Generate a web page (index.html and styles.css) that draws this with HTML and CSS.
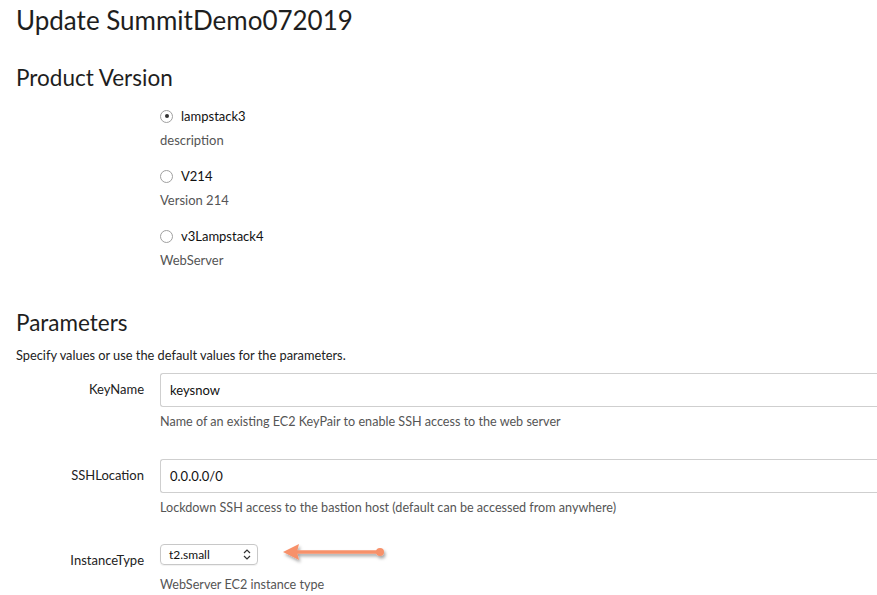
FILE: index.html
```html
<!DOCTYPE html>
<html>
<head>
<meta charset="utf-8">
<link rel="stylesheet" href="styles.css">
</head>
<body>
<div class="page">
  <h1 class="title">Update SummitDemo072019</h1>
  <h2 class="section">Product Version</h2>
  <div class="versions">
    <div class="version">
      <label class="radio-row"><span class="radio checked"></span><span class="radio-label">lampstack3</span></label>
      <div class="desc">description</div>
    </div>
    <div class="version">
      <label class="radio-row"><span class="radio"></span><span class="radio-label">V214</span></label>
      <div class="desc">Version 214</div>
    </div>
    <div class="version">
      <label class="radio-row"><span class="radio"></span><span class="radio-label">v3Lampstack4</span></label>
      <div class="desc">WebServer</div>
    </div>
  </div>
  <h2 class="section params">Parameters</h2>
  <p class="intro">Specify values or use the default values for the parameters.</p>
  <div class="param">
    <div class="plabel">KeyName</div>
    <div class="pfield">
      <div class="input">keysnow</div>
      <div class="help">Name of an existing EC2 KeyPair to enable SSH access to the web server</div>
    </div>
  </div>
  <div class="param">
    <div class="plabel">SSHLocation</div>
    <div class="pfield">
      <div class="input">0.0.0.0/0</div>
      <div class="help">Lockdown SSH access to the bastion host (default can be accessed from anywhere)</div>
    </div>
  </div>
  <div class="param select-param">
    <div class="plabel">InstanceType</div>
    <div class="pfield">
      <div class="select-row">
        <div class="select"><span>t2.small</span>
          <svg class="chev" width="8" height="11" viewBox="0 0 8 11"><path d="M1 4 L4 1 L7 4 M1 7 L4 10 L7 7" fill="none" stroke="#333" stroke-width="1.2"/></svg>
        </div>
        <svg class="arrow" width="110" height="28" viewBox="0 0 110 28">
          <defs>
            <filter id="sh" x="-20%" y="-50%" width="140%" height="200%">
              <feDropShadow dx="1.5" dy="2.5" stdDeviation="1.5" flood-color="#000" flood-opacity="0.35"/>
            </filter>
          </defs>
          <g filter="url(#sh)">
            <line x1="14" y1="12" x2="98" y2="12" stroke="#f7916a" stroke-width="3.5"/>
            <polygon points="1,12 17,4 15,12 17,20" fill="#f7916a"/>
            <circle cx="98" cy="12" r="4" fill="#f7916a"/>
          </g>
        </svg>
      </div>
      <div class="help">WebServer EC2 instance type</div>
    </div>
  </div>
</div>
</body>
</html>
```
FILE: styles.css
```css
* { box-sizing: border-box; }
html, body { margin: 0; padding: 0; background: #fff; }
body {
  font-family: "Source Sans Pro", Lato, "Open Sans", sans-serif;
  color: #222;
  overflow: hidden;
  width: 877px;
  height: 595px;
}
.page {
  padding: 3px 0 0 16px;
}
.title {
  margin: 0;
  font-size: 26px;
  font-weight: 400;
  line-height: 34px;
  color: #1e1e1e;
}
.section {
  margin: 27px 0 0 0;
  font-size: 22.5px;
  font-weight: 400;
  line-height: 28px;
  color: #1e1e1e;
}
.versions {
  margin-left: 144px;
  margin-top: 15px;
  display: flex;
  flex-direction: column;
  gap: 18px;
}
.version { display: flex; flex-direction: column; gap: 6px; }
.radio-row { display: flex; align-items: center; gap: 8px; height: 18px; }
.radio {
  width: 13px; height: 13px;
  border: 1px solid #a0a0a0;
  border-radius: 50%;
  background: #fff;
  display: flex; align-items: center; justify-content: center;
}
.radio.checked::after {
  content: "";
  width: 4px; height: 4px; border-radius: 50%;
  background: #333;
}
.radio-label { font-size: 13px; color: #111; }
.desc { font-size: 13px; color: #555; line-height: 18px; }
.params { margin-top: 40px; }
.intro { margin: 9px 0 0 0; font-size: 12.8px; color: #222; line-height: 18px; }
.param {
  display: flex;
  margin-top: 9px;
}
.param + .param { margin-top: 28px; }
.param + .select-param { margin-top: 25px; }
.plabel {
  width: 128px;
  text-align: right;
  font-size: 13px;
  color: #222;
  padding-top: 8px;
  flex: none;
}
.pfield {
  margin-left: 16px;
  flex: 1;
  display: flex;
  flex-direction: column;
}
.input {
  height: 34px;
  border: 1px solid #cfcfcf;
  border-right: none;
  border-radius: 3px 0 0 3px;
  padding: 7px 9px;
  font-size: 13px;
  color: #111;
  line-height: 18px;
}
.help {
  margin-top: 6px;
  font-size: 12.6px;
  color: #555;
  line-height: 18px;
}
.select-param .plabel { padding-top: 10px; }
.select-row { display: flex; align-items: center; gap: 24px; height: 24px; }
.select {
  width: 98px; height: 21px;
  border: 1px solid #c8c8c8;
  border-radius: 4px;
  display: flex; align-items: center; justify-content: space-between;
  padding: 0 6px 0 8px;
  font-size: 12px; color: #111;
  box-shadow: 0 1px 1px rgba(0,0,0,0.06);
}
.chev { flex: none; }
.select-param .help { margin-top: 10px; }
```
